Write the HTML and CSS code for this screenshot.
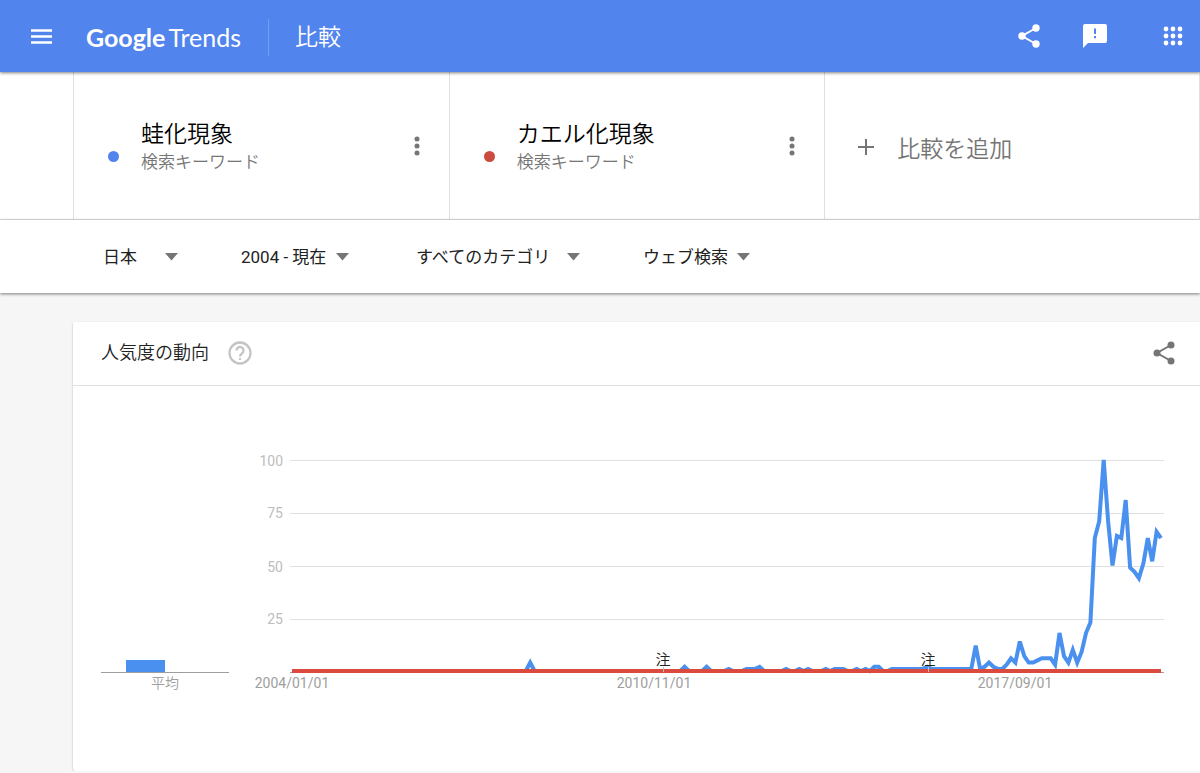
FILE: index.html
```
<!DOCTYPE html>
<html lang="ja">
<head>
    <meta charset="UTF-8">
    <meta name="viewport" content="width=device-width, initial-scale=1.0">
    <title>Google Trends - 比較</title>
    <link rel="stylesheet" href="styles.css">
</head>
<body>
    <header class="topbar">
        <button class="icon-button menu" aria-label="メニュー">
            <svg width="21" height="15" viewBox="0 0 21 15"><path d="M0 1.5h21M0 7.5h21M0 13.5h21" stroke="currentColor" stroke-width="2.400"/></svg>
        </button>
        <a class="logo" href="#"><span class="logo-google">Google</span><span class="logo-trends">Trends</span></a>
        <h1 class="page-title">比較</h1>
        <div class="actions">
            <button class="icon-button" aria-label="共有">
                <svg width="22" height="24" viewBox="0 0 22 24"><path d="M18 4 4 12l14 8" fill="none" stroke="currentColor" stroke-width="2"/><g fill="currentColor"><circle cx="18" cy="4" r="3.7"/><circle cx="4" cy="12" r="3.7"/><circle cx="18" cy="20" r="3.7"/></g></svg>
            </button>
            <button class="icon-button" aria-label="フィードバック">
                <svg width="24" height="24" viewBox="0 0 24 24"><path fill="currentColor" fill-rule="evenodd" d="M2 0h20a2 2 0 0 1 2 2v15a2 2 0 0 1-2 2H5L0 24V2a2 2 0 0 1 2-2zM11 4.500v5.500h2V4.500zM11 12v2.200h2V12z"/></svg>
            </button>
            <button class="icon-button" aria-label="アプリ">
                <svg width="20" height="20" viewBox="0 0 20 20" fill="currentColor"><circle cx="3" cy="3" r="2.400"/><circle cx="10" cy="3" r="2.400"/><circle cx="17" cy="3" r="2.400"/><circle cx="3" cy="10" r="2.400"/><circle cx="10" cy="10" r="2.400"/><circle cx="17" cy="10" r="2.400"/><circle cx="3" cy="17" r="2.400"/><circle cx="10" cy="17" r="2.400"/><circle cx="17" cy="17" r="2.400"/></svg>
            </button>
        </div>
    </header>

    <section class="terms">
        <div class="term">
            <span class="dot blue"></span>
            <div class="term-text">
                <h2>蛙化現象</h2>
                <p>検索キーワード</p>
            </div>
            <button class="icon-button kebab" aria-label="その他">
                <svg width="6" height="20" viewBox="0 0 6 20" fill="currentColor"><circle cx="3" cy="3" r="2.500"/><circle cx="3" cy="10" r="2.500"/><circle cx="3" cy="17" r="2.500"/></svg>
            </button>
        </div>
        <div class="term">
            <span class="dot red"></span>
            <div class="term-text">
                <h2>カエル化現象</h2>
                <p>検索キーワード</p>
            </div>
            <button class="icon-button kebab" aria-label="その他">
                <svg width="6" height="20" viewBox="0 0 6 20" fill="currentColor"><circle cx="3" cy="3" r="2.500"/><circle cx="3" cy="10" r="2.500"/><circle cx="3" cy="17" r="2.500"/></svg>
            </button>
        </div>
        <button class="term add">
            <svg width="16" height="16" viewBox="0 0 16 16"><path d="M8 0v16M0 8h16" stroke="currentColor" stroke-width="2"/></svg>
            比較を追加
        </button>
    </section>

    <nav class="filters">
        <div class="filter region">
            <select aria-label="地域"><option>日本</option></select>
            <svg width="13" height="8" viewBox="0 0 13 8"><path d="M0 0h13L6.500 7.500z" fill="currentColor"/></svg>
        </div>
        <div class="filter">
            <select aria-label="期間"><option>2004 - 現在</option></select>
            <svg width="13" height="8" viewBox="0 0 13 8"><path d="M0 0h13L6.500 7.500z" fill="currentColor"/></svg>
        </div>
        <div class="filter category">
            <select aria-label="カテゴリ"><option>すべてのカテゴリ</option></select>
            <svg width="13" height="8" viewBox="0 0 13 8"><path d="M0 0h13L6.500 7.500z" fill="currentColor"/></svg>
        </div>
        <div class="filter">
            <select aria-label="検索の種類"><option>ウェブ検索</option></select>
            <svg width="13" height="8" viewBox="0 0 13 8"><path d="M0 0h13L6.500 7.500z" fill="currentColor"/></svg>
        </div>
    </nav>

    <main class="card">
        <div class="card-header">
            <h2>人気度の動向</h2>
            <button class="icon-button help" aria-label="ヘルプ">
                <svg width="24" height="24" viewBox="0 0 24 24"><circle cx="12" cy="12" r="10.500" fill="none" stroke="currentColor" stroke-width="2.300"/><path d="M8.500 9.500a3.500 3.500 0 1 1 5.800 2.600C12.900 13.300 12 13.800 12 15.600" fill="none" stroke="currentColor" stroke-width="2.300"/><path d="M11 17h2v2h-2z" fill="currentColor"/></svg>
            </button>
            <button class="icon-button share" aria-label="共有">
                <svg width="22" height="24" viewBox="0 0 22 24"><path d="M18 4 4 12l14 8" fill="none" stroke="currentColor" stroke-width="2"/><g fill="currentColor"><circle cx="18" cy="4" r="3.500"/><circle cx="4" cy="12" r="3.500"/><circle cx="18" cy="20" r="3.500"/></g></svg>
            </button>
        </div>
        <div class="charts">
            <div class="average">
                <div class="average-plot"><div class="average-bar"></div></div>
                <p>平均</p>
            </div>
            <svg class="timeline" viewBox="0 0 919 250" role="img" aria-label="人気度の動向">
                <g class="grid">
                    <path d="M37 10.500h874M37 63.500h874M37 116.500h874M37 169.500h874"/>
                    <path class="axis" d="M37 222.500h874"/>
                </g>
                <g class="values">
                    <text x="30" y="16">100</text>
                    <text x="30" y="68">75</text>
                    <text x="30" y="122">50</text>
                    <text x="30" y="174">25</text>
                </g>
                <polyline id="blueLine" class="line blue-line"/>
                <polyline id="redLine" class="line red-line"/>
                <path class="note-tick" d="M410.500 217v5M675.500 217v5"/>
                <g class="notes">
                    <text x="410" y="215">注</text>
                    <text x="675" y="215">注</text>
                </g>
                <g class="dates">
                    <text x="39" y="238">2004/01/01</text>
                    <text x="401" y="238">2010/11/01</text>
                    <text x="762" y="238">2017/09/01</text>
                </g>
            </svg>
        </div>
    </main>

    <script>
        // Months since 2004/01 that have a value, everything else is 0
        const early = {
            54: 4, 89: 2, 94: 2, 99: 1, 103: 1, 104: 1, 105: 1, 106: 2,
            112: 1, 115: 1, 117: 1, 121: 1, 123: 1, 124: 1, 125: 1,
            128: 1, 130: 1, 132: 2, 133: 2
        };
        // From 2015/05 on every month has a value
        const recent = [
            1, 1, 1, 1, 1, 1, 1, 1, 2, 1, 1, 1, 1, 1, 1, 1, 1, 1, 1,
            12, 1, 2, 4, 2, 1, 1, 3, 6, 4, 14, 7, 4, 4, 5, 6, 6, 6, 3,
            18, 7, 4, 10, 4, 9, 18, 23, 63, 71, 100, 71, 50, 64, 63, 81,
            49, 47, 44, 51, 63, 52, 66, 63
        ];
        const recentStart = 136;
        const months = recentStart + recent.length;

        function toPoints(valueAt) {
            const points = [];
            for (let i = 0; i < months; i++) {
                const x = 39 + i * 869 / (months - 1);
                const y = 221 - valueAt(i) * 2.11;
                points.push(`${x.toFixed(1)},${y.toFixed(1)}`);
            }
            return points.join(' ');
        }

        const blue = i => i < recentStart ? (early[i] || 0) : recent[i - recentStart];
        document.getElementById('blueLine').setAttribute('points', toPoints(blue));
        document.getElementById('redLine').setAttribute('points', toPoints(() => 0));
    </script>
</body>
</html>
```

FILE: styles.css
```
* {
    box-sizing: border-box;
}
body {
    margin: 0;
    background-color: #f6f6f6;
    color: #212121;
    font-family: Roboto, "Noto Sans CJK JP", sans-serif;
    font-weight: 350;
}
h1, h2, p {
    margin: 0;
    font-weight: 350;
}
button, select {
    padding: 0;
    border: none;
    background: none;
    color: inherit;
    font: inherit;
    cursor: pointer;
}
svg {
    display: block;
    flex: none;
}

/* Top bar */
.topbar {
    position: relative;
    display: flex;
    align-items: center;
    height: 72px;
    padding: 0 17px 0 31px;
    background-color: #5284ed;
    color: white;
    box-shadow: 0 1px 3px rgba(0, 0, 0, 0.5);
}
.logo {
    display: flex;
    gap: 3px;
    margin-left: 34px;
    padding-top: 2px;
    color: white;
    font-family: Lato, sans-serif;
    font-size: 25px;
    line-height: 36px;
    text-decoration: none;
}
.logo-google {
    font-weight: 700;
}
.logo-trends {
    font-weight: 400;
}
.page-title {
    margin: 3px 0 0 27px;
    padding-left: 26px;
    border-left: 1px solid #759df1;
    font-size: 23px;
    line-height: 37px;
}
.actions {
    display: flex;
    align-items: center;
    margin-left: auto;
}
.actions .icon-button + .icon-button {
    margin-left: 43px;
}
.actions .icon-button:last-child {
    margin-left: 56px;
}

/* Compared terms */
.terms {
    display: flex;
    height: 148px;
    padding-left: 73px;
    border-bottom: 1px solid #e0e0e0;
    background-color: white;
}
.term {
    flex: 1;
    display: flex;
    align-items: center;
    padding: 0 29px 0 34px;
    border-left: 1px solid #e0e0e0;
}
.term:last-child {
    border-right: 1px solid #e0e0e0;
}
.dot {
    width: 11px;
    height: 11px;
    margin-top: 22px;
    border-radius: 50%;
}
.blue { background-color: #5284ed; }
.red { background-color: #cb4b3e; }
.term-text {
    margin-left: 22px;
    padding-top: 4px;
}
.term-text h2 {
    color: black;
    font-size: 23px;
    line-height: 28px;
}
.term-text p {
    color: #757575;
    font-size: 17px;
    line-height: 26px;
}
.kebab {
    margin-left: auto;
    color: #757575;
}
.term.add {
    gap: 23px;
    padding: 2px 29px 0 33px;
    color: #757575;
    font-size: 23px;
}

/* Filters */
.filters {
    position: relative;
    display: flex;
    gap: 63px;
    height: 73px;
    padding-left: 103px;
    background-color: white;
    box-shadow: 0 1px 3px rgba(0, 0, 0, 0.5);
}
.filter {
    display: flex;
    align-items: center;
    gap: 9px;
    color: #757575;
}
.filter select {
    appearance: none;
    color: #212121;
    font-size: 17px;
    font-weight: 400;
}
.region select {
    width: 53px;
}
.category {
    margin-left: 4px;
}
.category select {
    width: 142px;
}

/* Chart card */
.card {
    margin: 29px 0 0 73px;
    border-radius: 2px 0 0 2px;
    background-color: white;
    box-shadow: 0 1px 2px rgba(0, 0, 0, 0.3);
}
.card-header {
    display: flex;
    align-items: center;
    height: 64px;
    padding: 0 25px 2px 28px;
    border-bottom: 1px solid #e0e0e0;
}
.card-header h2 {
    font-size: 18px;
    line-height: 24px;
}
.help {
    margin-left: 19px;
    color: #c4c4c4;
}
.share {
    margin-left: auto;
    color: #757575;
}
.charts {
    display: flex;
    gap: 24px;
    padding: 64px 28px 71px;
}
.average {
    flex: none;
    display: flex;
    flex-direction: column;
    justify-content: flex-end;
    width: 128px;
    padding-bottom: 6px;
    color: #9e9e9e;
    font-size: 14px;
    line-height: 21px;
    text-align: center;
}
.average-plot {
    padding-left: 25px;
    border-bottom: 1px solid #9e9e9e;
}
.average-bar {
    width: 39px;
    height: 12px;
    background-color: #4a90ee;
}
.timeline {
    flex: 1;
    min-width: 0;
    font-size: 14px;
    font-weight: 400;
}
.grid {
    stroke: #e0e0e0;
}
.axis {
    stroke: #9e9e9e;
}
.values {
    fill: #bdbdbd;
    text-anchor: end;
}
.dates {
    fill: #9e9e9e;
    text-anchor: middle;
}
.notes {
    fill: #212121;
    font-size: 15px;
    font-weight: 350;
    text-anchor: middle;
}
.note-tick {
    stroke: #bdbdbd;
}
.line {
    fill: none;
    stroke-width: 4;
}
.blue-line {
    stroke: #4a90ee;
}
.red-line {
    stroke: #db4a3e;
}
```
